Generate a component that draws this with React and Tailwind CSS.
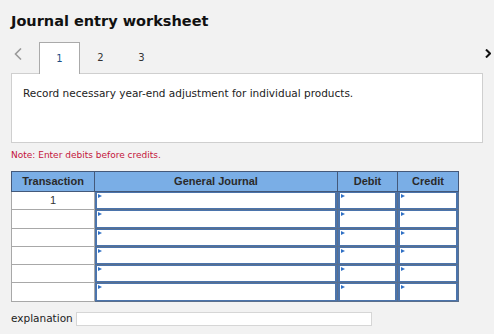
// Journal entry worksheet — tab strip, instruction panel, journal grid.

const ROWS = [1, null, null, null, null, null]

function Flag() {
  return (
    <span className="absolute left-[1px] top-[1px] h-0 w-0 border-y-[2px] border-l-[4px] border-y-transparent border-l-[#2f6fc4]" />
  )
}

function EntryCell() {
  return (
    <td className="border border-[#5a6f8c] p-0">
      <div className="relative h-[17.3px] border-x-2 border-y border-[#4b74ac] bg-white">
        <Flag />
      </div>
    </td>
  )
}

export default function App() {
  return (
    <div
      className="h-[334px] w-[494px] overflow-hidden bg-[#f2f2f2] text-[#222]"
      style={{ fontFamily: '"DejaVu Sans", Verdana, sans-serif' }}
    >
      <h1 className="px-[11px] pt-[12px] text-[14.5px] font-bold leading-[18px] text-[#111]">
        Journal entry worksheet
      </h1>

      <div className="mt-[12px] flex h-[31px] items-end pl-[11px] pr-[2px]">
        <span className="mb-[13px] w-[28px] pl-[3px]">
          <svg width="8" height="12" viewBox="0 0 8 12" fill="none" stroke="#9a9a9a" strokeWidth="1.6">
            <path d="M7 0.5 L1.5 6 L7 11.5" />
          </svg>
        </span>
        <div className="relative z-10 -mb-px flex h-[32px] w-[41px] items-center justify-center border border-b-0 border-[#aaa] bg-white text-[10px] text-[#1c4f86]">
          1
        </div>
        <div className="flex h-[31px] w-[41px] items-center justify-center text-[10px] text-[#333]">2</div>
        <div className="flex h-[31px] w-[41px] items-center justify-center text-[10px] text-[#333]">3</div>
        <span className="mb-[15px] ml-auto pr-[1px]">
          <svg width="6" height="9" viewBox="0 0 6 9" fill="none" stroke="#111" strokeWidth="2">
            <path d="M1 0.5 L5 4.5 L1 8.5" />
          </svg>
        </span>
      </div>

      <div className="mx-[11px] h-[70px] border border-[#cfcfcf] bg-white px-[11px] pt-[12px] text-[10.5px] leading-[14px] text-[#222]">
        Record necessary year-end adjustment for individual products.
      </div>

      <p className="mt-[6px] px-[11px] text-[9px] leading-[12px] text-[#c4143c]">
        Note: Enter debits before credits.
      </p>

      <table
        className="ml-[11px] mt-[10px] w-[448px] border-collapse"
        style={{ fontFamily: '"Liberation Sans", Arial, sans-serif' }}
      >
        <thead>
          <tr className="h-[20px] bg-[#7aaee6] text-[11px] font-bold text-[#2a2a2a]">
            <th className="w-[83px] border border-[#44597a] font-bold">Transaction</th>
            <th className="border border-[#44597a] font-bold">General Journal</th>
            <th className="w-[60px] border border-[#44597a] font-bold">Debit</th>
            <th className="w-[61px] border border-[#44597a] font-bold">Credit</th>
          </tr>
        </thead>
        <tbody>
          {ROWS.map((n, i) => (
            <tr key={i}>
              <td className="border border-[#a8a8a8] bg-white p-0 text-center text-[11px] leading-[17px] text-[#333]">
                {n}
              </td>
              <EntryCell />
              <EntryCell />
              <EntryCell />
            </tr>
          ))}
        </tbody>
      </table>

      <div className="mt-[9px] flex items-center gap-[3px] px-[11px]">
        <span className="text-[10.5px] text-[#222]">explanation</span>
        <div className="h-[14px] w-[296px] border border-[#d6d6d6] bg-white" />
      </div>
    </div>
  )
}
